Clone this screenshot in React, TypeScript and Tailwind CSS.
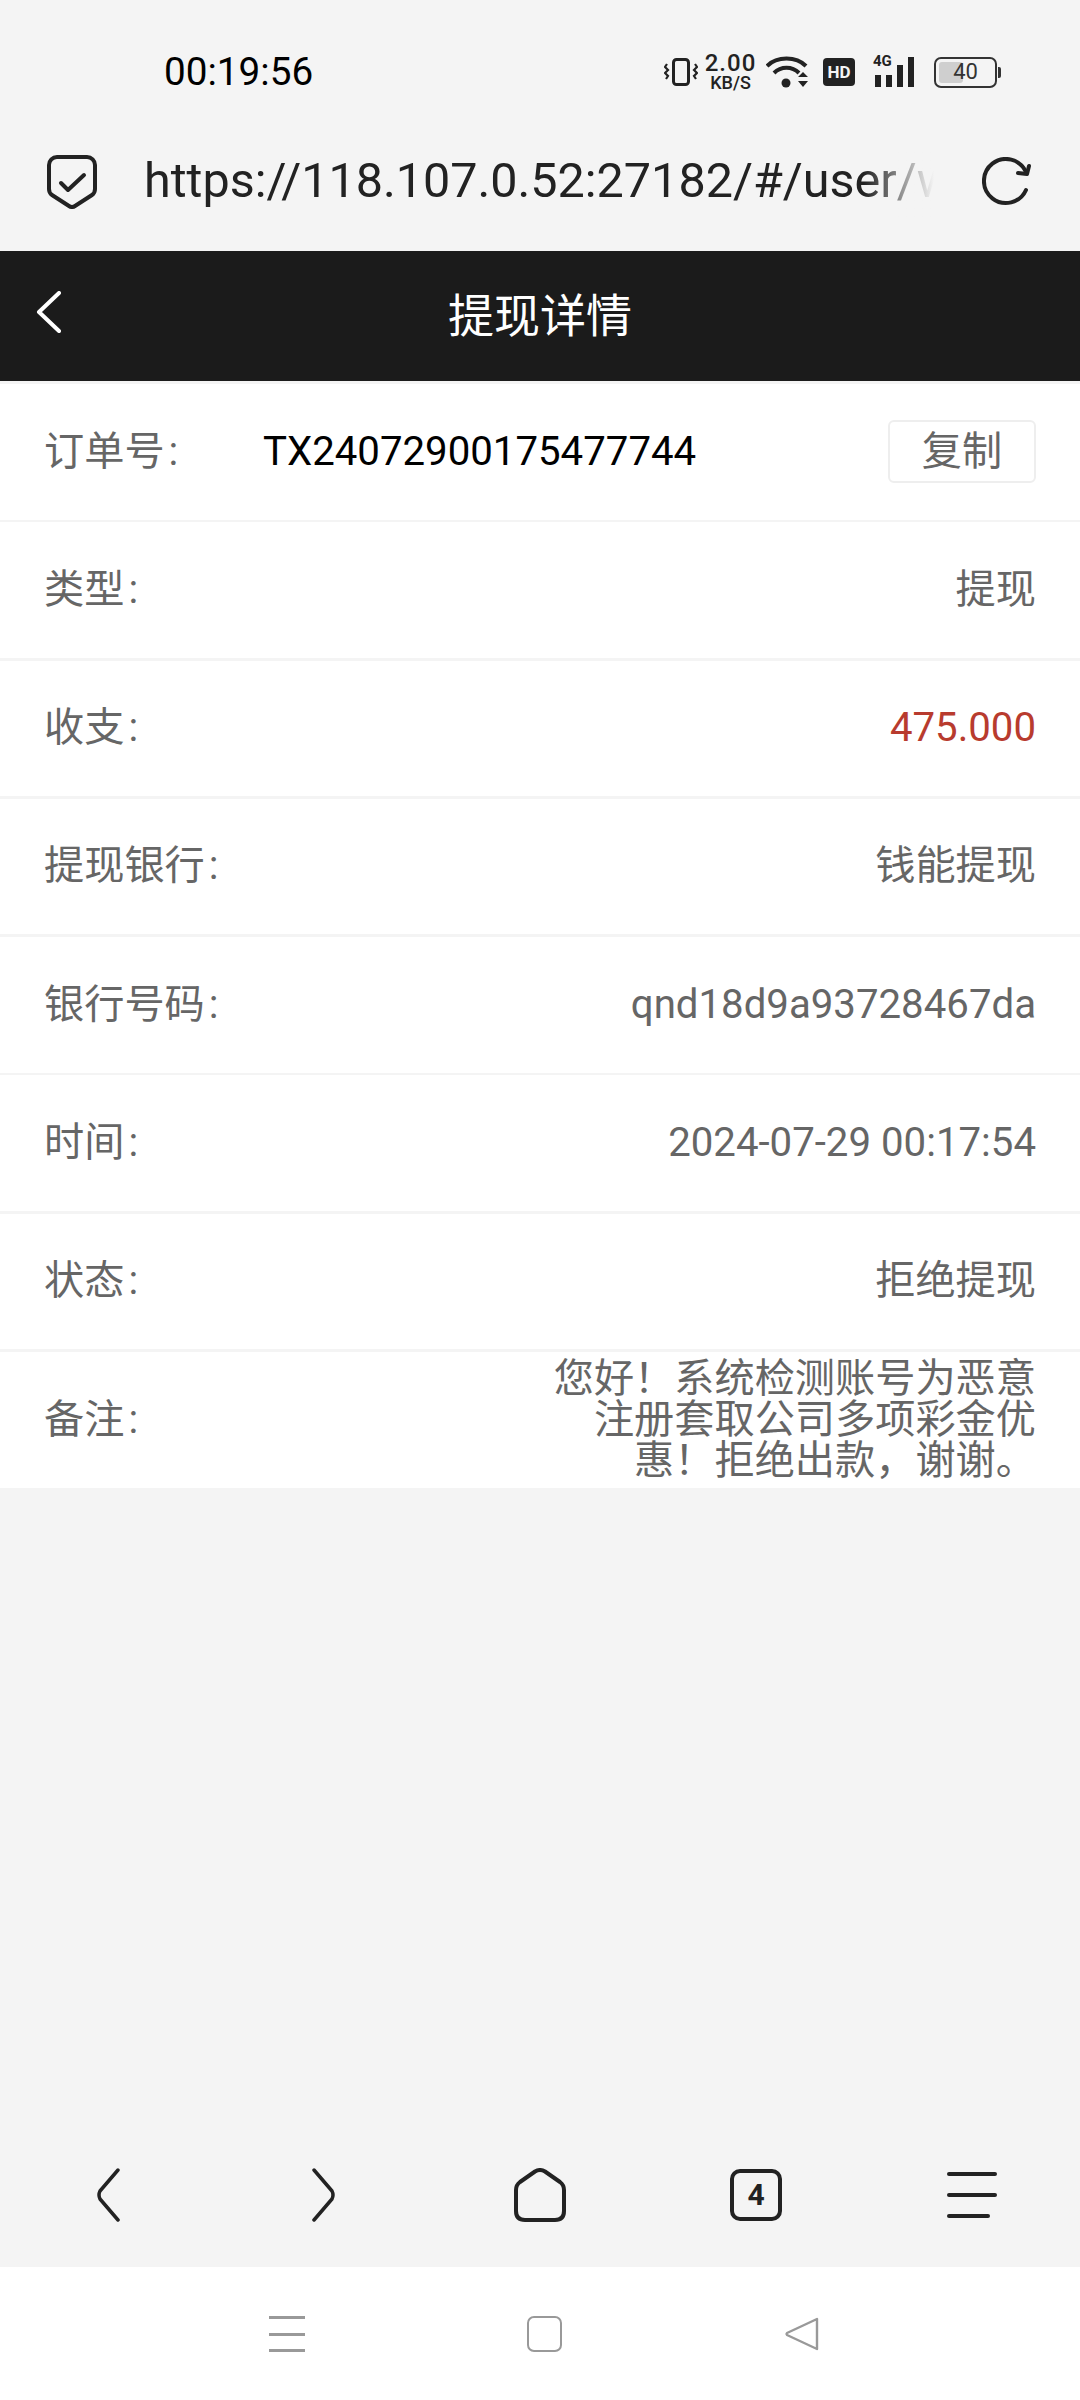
import React from 'react';

const rows = [
  { label: '类型', value: '提现' },
  { label: '收支', value: '475.000', valueClass: 'text-[#b83b2e]' },
  { label: '提现银行', value: '钱能提现' },
  { label: '银行号码', value: 'qnd18d9a93728467da' },
  { label: '时间', value: '2024-07-29 00:17:54' },
  { label: '状态', value: '拒绝提现' },
];

const fontStack = { fontFamily: 'Roboto, "Noto Sans CJK SC", sans-serif' };

const Label = ({ text }: { text: string }) => (
  <span>
    {text}
    <span className="ml-[4px]">:</span>
  </span>
);

const StatusIcons = () => (
  <div className="flex items-center text-[#222]">
    <svg width="34" height="28" viewBox="0 0 34 28" fill="none" stroke="currentColor">
      <rect x="9.5" y="1.5" width="15" height="25" rx="3" strokeWidth="3" />
      <path d="M3 6l-2 3 3 3-3 3 3 3-2 3M31 6l2 3-3 3 3 3-3 3 2 3" strokeWidth="2.2" />
    </svg>
    <div className="ml-[6px] flex w-[53px] flex-col items-center font-medium">
      <span className="text-[24px] leading-[21px] tracking-[1px]">2.00</span>
      <span className="text-[18px] leading-[18px]">KB/S</span>
    </div>
    <svg className="ml-[9px]" width="44" height="34" viewBox="0 0 44 34" fill="currentColor">
      <path d="M1 9C11 -1 30 -1 40 9" fill="none" stroke="currentColor" strokeWidth="4" transform="translate(0 2)" />
      <path d="M8 18c7-7 18-7 25 0" fill="none" stroke="currentColor" strokeWidth="4" />
      <circle cx="20" cy="28" r="4.5" />
      <path d="M31 22l5-5 5 5zM31 26h10l-5 6z" transform="translate(1 0)" />
    </svg>
    <div className="ml-[13px] flex h-[28px] w-[32px] items-center justify-center rounded-[4px] bg-[#222] text-[17px] leading-none font-bold text-[#f4f4f4]">HD</div>
    <div className="relative ml-[20px] flex h-[30px] w-[44px] items-end gap-[5px]">
      <span className="absolute left-[-2px] top-[-3px] text-[15px] leading-none font-bold">4G</span>
      <span className="h-[12px] w-[6px] bg-[#222]" />
      <span className="h-[12px] w-[6px] bg-[#222]" />
      <span className="h-[22px] w-[6px] bg-[#222]" />
      <span className="h-[30px] w-[6px] bg-[#222]" />
    </div>
    <div className="ml-[15px] flex items-center">
      <div className="relative flex h-[31px] w-[63px] items-center justify-center rounded-[7px] border-2 border-[#333]">
        <span className="absolute bottom-[3px] left-[3px] top-[3px] w-[24px] rounded-[3px] bg-[#cfcfcf]" />
        <span className="relative text-[22px] leading-none text-[#333]">40</span>
      </div>
      <span className="ml-[1px] h-[11px] w-[3px] rounded-r-[2px] bg-[#333]" />
    </div>
  </div>
);

const ShieldIcon = () => (
  <svg width="50" height="54" viewBox="0 0 50 54" fill="none" stroke="#222" strokeWidth="4" strokeLinejoin="round" strokeLinecap="round">
    <path d="M10 2h30a8 8 0 0 1 8 8v24q0 4-3 6L28 51q-3 2-6 0L5 40q-3-2-3-6V10a8 8 0 0 1 8-8z" />
    <path d="M14 28l7 7 16-15" />
  </svg>
);

const ReloadIcon = () => (
  <svg width="50" height="50" viewBox="0 0 50 50" fill="none" stroke="#222" strokeWidth="4" strokeLinecap="round" strokeLinejoin="round">
    <path d="M44 33A22 22 0 1 1 44 15" />
    <path d="M47 9l-2 8-9-1" />
  </svg>
);

const BottomNav = () => (
  <div className="flex h-[99px] items-start bg-[#f4f4f4]">
    {[
      <svg key="back" width="26" height="54" viewBox="0 0 26 54" fill="none" stroke="#222" strokeWidth="3.5" strokeLinecap="round" strokeLinejoin="round"><path d="M23 2L5 23q-2 4 0 8l18 21" /></svg>,
      <svg key="fwd" width="26" height="54" viewBox="0 0 26 54" fill="none" stroke="#222" strokeWidth="3.5" strokeLinecap="round" strokeLinejoin="round"><path d="M3 2l18 21q2 4 0 8L3 52" /></svg>,
      <svg key="home" width="52" height="54" viewBox="0 0 52 54" fill="none" stroke="#222" strokeWidth="4" strokeLinejoin="round"><path d="M21 3.5q5-3 10 0L46 14q4 3 4 8v21q0 9-9 9H11q-9 0-9-9V22q0-5 4-8z" /></svg>,
      <div key="tabs" className="flex h-[52px] w-[52px] items-center justify-center rounded-[10px] border-[4px] border-[#222] text-[30px] leading-none font-bold text-[#222]">4</div>,
      <div key="menu" className="flex h-[46px] w-[50px] flex-col justify-between">
        <span className="h-[4px] w-[50px] rounded-full bg-[#222]" />
        <span className="h-[4px] w-[50px] rounded-full bg-[#222]" />
        <span className="h-[4px] w-[43px] rounded-full bg-[#222]" />
      </div>,
    ].map((icon, i) => (
      <div key={i} className="flex h-[54px] flex-1 items-center justify-center">{icon}</div>
    ))}
  </div>
);

const SystemNav = () => (
  <div className="flex h-[133px] items-start justify-center gap-[222px] bg-white pl-[8px] pt-[49px]">
    <div className="flex h-[36px] w-[36px] flex-col justify-between">
      <span className="h-[3px] bg-[#999]" />
      <span className="h-[3px] bg-[#999]" />
      <span className="h-[3px] bg-[#999]" />
    </div>
    <div className="h-[36px] w-[35px] rounded-[7px] border-2 border-[#999]" />
    <svg width="36" height="36" viewBox="0 0 36 36" fill="none" stroke="#999" strokeWidth="2.4" strokeLinejoin="round">
      <path d="M33 3v30L3 19q-1-1 0-2z" />
    </svg>
  </div>
);

export default function App() {
  return (
    <div className="flex h-[2400px] flex-col bg-[#f4f4f4]" style={fontStack}>
      <div className="flex h-[120px] items-center justify-between pl-[164px] pr-[79px] pt-[24px]">
        <span className="text-[38.7px] text-black">00:19:56</span>
        <StatusIcons />
      </div>

      <div className="flex h-[131px] items-center pb-[8px] pl-[47px] pr-[48px]">
        <ShieldIcon />
        <div className="relative ml-[47px] flex-1 overflow-hidden whitespace-nowrap text-[48.5px] text-[#222]">
          https://118.107.0.52:27182/#/user/withdraw
          <div className="absolute inset-y-0 right-0 w-[70px] bg-gradient-to-r from-transparent to-[#f4f4f4]" />
        </div>
        <div className="ml-[48px]">
          <ReloadIcon />
        </div>
      </div>

      <div className="relative flex h-[130px] items-center justify-center bg-[#1b1b1b]">
        <svg className="absolute left-[36px] top-[40px]" width="26" height="42" viewBox="0 0 26 42" fill="none" stroke="white" strokeWidth="4" strokeLinecap="round" strokeLinejoin="round">
          <path d="M23 2L3 21l20 19" />
        </svg>
        <span className="text-[46px] text-white">提现详情</span>
      </div>

      <div className="mt-[3px] flex flex-col gap-[2.8px] text-[40.2px] text-[#666]">
        <div className="flex h-[135.5px] items-center bg-white px-[44px]">
          <span className="w-[219px]">
            <Label text="订单号" />
          </span>
          <span className="flex-1 text-black">TX24072900175477744</span>
          <div className="flex h-[63px] w-[148px] items-center justify-center rounded-[6px] border-2 border-[#eeeeee]">复制</div>
        </div>
        {rows.map((row) => (
          <div key={row.label} className="flex h-[135.5px] items-center justify-between bg-white px-[44px]">
            <Label text={row.label} />
            <span className={row.valueClass}>{row.value}</span>
          </div>
        ))}
        <div className="flex h-[135.5px] items-center justify-between bg-white px-[44px]">
          <Label text="备注" />
          <span className="w-[492px] text-right leading-[41px]">您好！系统检测账号为恶意注册套取公司多项彩金优惠！拒绝出款，谢谢。</span>
        </div>
      </div>

      <div className="mt-auto">
        <BottomNav />
        <SystemNav />
      </div>
    </div>
  );
}
